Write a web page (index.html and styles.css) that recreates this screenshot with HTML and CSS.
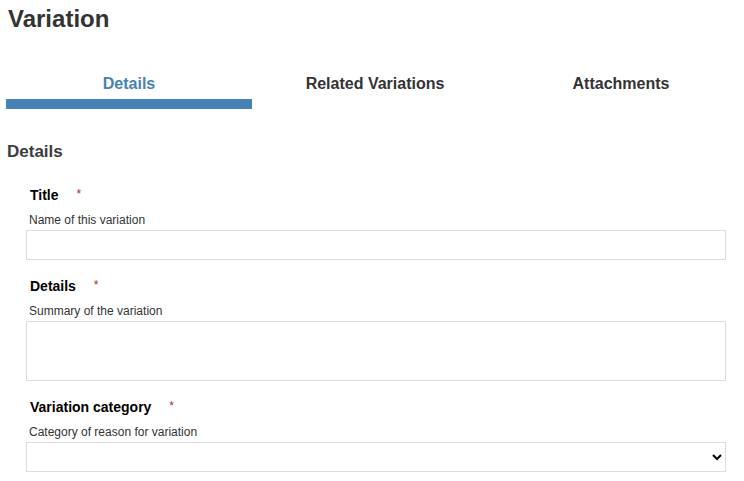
FILE: index.html
```html
<!DOCTYPE html>
<html lang="en">
<head>
    <meta charset="UTF-8" />
    <meta name="viewport" content="width=device-width, initial-scale=1.0" />
    <title>Variation</title>
    <link rel="stylesheet" href="styles.css">
</head>
<body>
    <div id="app">
        <h1 class="page-title">Variation</h1>

        <div class="tabs">
            <div class="tab active">Details</div>
            <div class="tab">Related Variations</div>
            <div class="tab">Attachments</div>
        </div>

        <h2 class="section-title">Details</h2>

        <form class="form">
            <div class="field">
                <label class="field-label" for="title">Title <span class="req">*</span></label>
                <div class="field-help">Name of this variation</div>
                <input id="title" class="field-input" type="text" />
            </div>
            <div class="field">
                <label class="field-label" for="details">Details <span class="req">*</span></label>
                <div class="field-help">Summary of the variation</div>
                <textarea id="details" class="field-input field-textarea"></textarea>
            </div>
            <div class="field">
                <label class="field-label" for="category">Variation category <span class="req">*</span></label>
                <div class="field-help">Category of reason for variation</div>
                <select id="category" class="field-input field-select">
                    <option></option>
                </select>
            </div>
        </form>
    </div>
</body>
</html>
```

FILE: styles.css
```css
* { box-sizing: border-box; }
body {
    font-family: 'Liberation Sans', Arial, sans-serif;
    margin: 0;
    padding: 0;
    background-color: #fff;
    color: #333;
}
#app {
    padding: 5px 0 0 6px;
}
.page-title {
    margin: 0;
    padding-left: 2px;
    font-size: 24px;
    line-height: 28px;
    font-weight: bold;
    color: #333;
}
/* Tabs */
.tabs {
    display: grid;
    grid-template-columns: 1fr 1fr 1fr;
    margin-top: 40px;
}
.tab {
    text-align: center;
    font-size: 16px;
    line-height: 20px;
    font-weight: bold;
    color: #333;
    padding-top: 1px;
    padding-bottom: 5px;
    border-bottom: 10px solid transparent;
}
.tab.active {
    color: #4682b4;
    border-bottom-color: #4682b4;
}
.section-title {
    margin: 33px 0 0 1px;
    font-size: 17px;
    line-height: 20px;
    font-weight: bold;
    color: #3c3c3c;
}
/* Form */
.form {
    margin-top: 24px;
    padding: 0 18px 0 20px;
}
.field {
    margin-bottom: 17px;
}
.field-label {
    display: block;
    padding-left: 4px;
    font-size: 14px;
    line-height: 16px;
    font-weight: bold;
    color: #000;
}
.req {
    margin-left: 14px;
    font-size: 12px;
    font-weight: normal;
    color: #a52a2a;
    vertical-align: 2px;
}
.field-help {
    margin-top: 9px;
    padding-left: 3px;
    font-size: 12px;
    line-height: 16px;
    color: #333;
}
.field-input {
    display: block;
    width: 100%;
    height: 30px;
    margin-top: 2px;
    border: 1px solid #dcdcdc;
    border-radius: 0;
    background: #fff;
    font-family: inherit;
    font-size: 14px;
    padding: 4px 6px;
}
.field-textarea {
    height: 60px;
    resize: none;
}
.field-select {
    padding: 0 4px;
}
```
